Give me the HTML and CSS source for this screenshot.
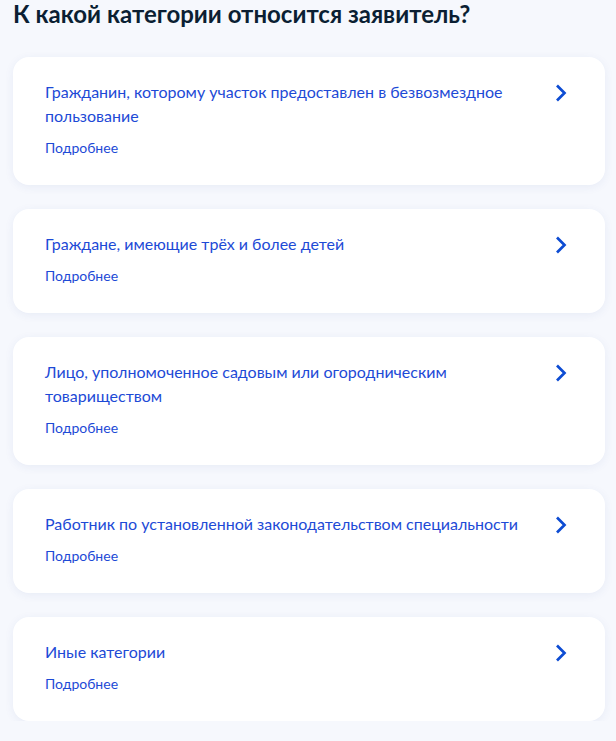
FILE: index.html
```html
<!DOCTYPE html>
<html lang="ru">
<head>
<meta charset="utf-8">
<link rel="stylesheet" href="styles.css">
</head>
<body>
<div class="page">
  <h1 class="title">К какой категории относится заявитель?</h1>
  <div class="list">
    <div class="card">
      <div class="text">
        <div class="name">Гражданин, которому участок предоставлен в безвозмездное пользование</div>
        <div class="more">Подробнее</div>
      </div>
      <svg class="chev" width="24" height="24" viewBox="0 0 24 24"><path d="M8 4.5l7.5 7.5-7.5 7.5" fill="none" stroke="#0d4cd3" stroke-width="2.7" stroke-linejoin="miter" stroke-linecap="butt"/></svg>
    </div>
    <div class="card">
      <div class="text">
        <div class="name">Граждане, имеющие трёх и более детей</div>
        <div class="more">Подробнее</div>
      </div>
      <svg class="chev" width="24" height="24" viewBox="0 0 24 24"><path d="M8 4.5l7.5 7.5-7.5 7.5" fill="none" stroke="#0d4cd3" stroke-width="2.7" stroke-linejoin="miter" stroke-linecap="butt"/></svg>
    </div>
    <div class="card">
      <div class="text">
        <div class="name">Лицо, уполномоченное садовым или огородническим товариществом</div>
        <div class="more">Подробнее</div>
      </div>
      <svg class="chev" width="24" height="24" viewBox="0 0 24 24"><path d="M8 4.5l7.5 7.5-7.5 7.5" fill="none" stroke="#0d4cd3" stroke-width="2.7" stroke-linejoin="miter" stroke-linecap="butt"/></svg>
    </div>
    <div class="card">
      <div class="text">
        <div class="name">Работник по установленной законодательством специальности</div>
        <div class="more">Подробнее</div>
      </div>
      <svg class="chev" width="24" height="24" viewBox="0 0 24 24"><path d="M8 4.5l7.5 7.5-7.5 7.5" fill="none" stroke="#0d4cd3" stroke-width="2.7" stroke-linejoin="miter" stroke-linecap="butt"/></svg>
    </div>
    <div class="card">
      <div class="text">
        <div class="name">Иные категории</div>
        <div class="more">Подробнее</div>
      </div>
      <svg class="chev" width="24" height="24" viewBox="0 0 24 24"><path d="M8 4.5l7.5 7.5-7.5 7.5" fill="none" stroke="#0d4cd3" stroke-width="2.7" stroke-linejoin="miter" stroke-linecap="butt"/></svg>
    </div>
  </div>
</div>
</body>
</html>
```
FILE: styles.css
```css
html, body {
  margin: 0;
  padding: 0;
  background: #f6f8fd;
}
body {
  font-family: Lato, "Noto Sans", sans-serif;
  -webkit-font-smoothing: antialiased;
}
.page {
  padding: 0 11px 0 13px;
}
.title {
  margin: 0;
  font-size: 24px;
  line-height: 28px;
  font-weight: 700;
  color: #0b1f33;
}
.list {
  margin-top: 29px;
  display: flex;
  flex-direction: column;
  gap: 24px;
}
.card {
  background: #fff;
  border-radius: 16px;
  box-shadow: 0 2px 10px rgba(40, 70, 150, 0.07);
  padding: 23px 32px 25px;
  display: flex;
  align-items: flex-start;
  gap: 24px;
}
.text {
  flex: 1;
}
.name {
  font-size: 16px;
  line-height: 24px;
  color: #1d4ad6;
}
.more {
  margin-top: 8px;
  font-size: 14px;
  line-height: 24px;
  color: #1d4ad6;
}
.chev {
  flex: none;
  margin-top: 1px;
}
```
